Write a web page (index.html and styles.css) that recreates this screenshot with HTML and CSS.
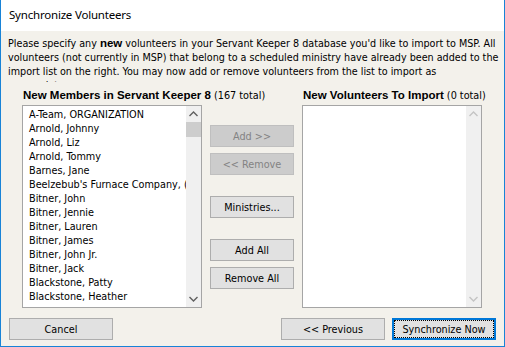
FILE: index.html
```html
<!DOCTYPE html>
<html lang="en">
<head>
    <meta charset="UTF-8">
    <title>Synchronize Volunteers</title>
    <link rel="stylesheet" href="styles.css">
</head>
<body>
    <div class="dialog">
        <div class="titlebar">Synchronize Volunteers</div>
        <div class="content">
            <p class="intro">Please specify any <b>new</b> volunteers in your Servant Keeper 8 database you'd like to import to MSP. All volunteers (not currently in MSP) that belong to a scheduled ministry have already been added to the import list on the right. You may now add or remove volunteers from the list to import as<br>appropriate.</p>

            <div class="picker">
                <!-- miembros nuevos -->
                <div class="pane">
                    <div class="pane-title"><b>New Members in Servant Keeper 8</b> (167 total)</div>
                    <div class="listbox">
                        <ul class="items">
                            <li>A-Team, ORGANIZATION</li>
                            <li>Arnold, Johnny</li>
                            <li>Arnold, Liz</li>
                            <li>Arnold, Tommy</li>
                            <li>Barnes, Jane</li>
                            <li>Beelzebub's Furnace Company, (Org)</li>
                            <li>Bitner, John</li>
                            <li>Bitner, Jennie</li>
                            <li>Bitner, Lauren</li>
                            <li>Bitner, James</li>
                            <li>Bitner, John Jr.</li>
                            <li>Bitner, Jack</li>
                            <li>Blackstone, Patty</li>
                            <li>Blackstone, Heather</li>
                        </ul>
                        <div class="scrollbar">
                            <span class="arrow"><svg width="9" height="6" viewBox="0 0 9 6"><polyline points="0.5,5 4.5,1 8.5,5" /></svg></span>
                            <span class="thumb"></span>
                            <span class="track"></span>
                            <span class="arrow"><svg width="9" height="6" viewBox="0 0 9 6"><polyline points="0.5,1 4.5,5 8.5,1" /></svg></span>
                        </div>
                    </div>
                </div>

                <div class="actions">
                    <button class="btn" disabled>Add &gt;&gt;</button>
                    <button class="btn" disabled>&lt;&lt; Remove</button>
                    <button class="btn spaced">Ministries...</button>
                    <button class="btn spaced">Add All</button>
                    <button class="btn">Remove All</button>
                </div>

                <!-- voluntarios a importar -->
                <div class="pane">
                    <div class="pane-title"><b>New Volunteers To Import</b> (0 total)</div>
                    <div class="listbox">
                        <ul class="items"></ul>
                        <div class="scrollbar disabled">
                            <span class="arrow"><svg width="9" height="6" viewBox="0 0 9 6"><polyline points="0.5,5 4.5,1 8.5,5" /></svg></span>
                            <span class="track"></span>
                            <span class="arrow"><svg width="9" height="6" viewBox="0 0 9 6"><polyline points="0.5,1 4.5,5 8.5,1" /></svg></span>
                        </div>
                    </div>
                </div>
            </div>

            <div class="footer">
                <button class="btn wide">Cancel</button>
                <span class="spacer"></span>
                <button class="btn wide">&lt;&lt; Previous</button>
                <button class="btn wide default">Synchronize Now</button>
            </div>
        </div>
    </div>
</body>
</html>
```

FILE: styles.css
```css
body {
    margin: 0;
    font-family: Tahoma, "DejaVu Sans Condensed", sans-serif;
    font-size: 10.75px;
    color: #000;
}

b {
    font-family: "Liberation Sans", sans-serif;
    font-size: 11.5px;
}

.dialog {
    width: 505px;
    height: 347px;
    box-sizing: border-box;
    border: 1px solid #1883d7;
    border-top: none;
    display: flex;
    flex-direction: column;
}

.titlebar {
    height: 31px;
    line-height: 30px;
    padding-left: 8px;
    background-color: #fff;
    font-family: "Segoe UI", "Noto Sans", sans-serif;
    font-size: 11.5px;
    letter-spacing: -0.2px;
}

.content {
    flex: 1;
    background-color: #f3f1eb;
    padding: 5px 0 0 7px;
}

.intro {
    margin: 0;
    height: 46px;
    font-size: 10.7px;
    line-height: 14px;
    overflow: hidden;
}

.picker {
    display: flex;
    gap: 8px;
    margin: 6px 0 0 14px;
}

.pane {
    width: 180px;
}

.pane-title {
    padding-left: 1px;
    line-height: 14px;
    margin-bottom: 2px;
    white-space: nowrap;
}

.listbox {
    height: 203px;
    box-sizing: border-box;
    border: 1px solid #a5a5a5;
    background-color: #fff;
    display: flex;
}

.items {
    flex: 1;
    margin: 0;
    padding: 2px 0 0 6px;
    list-style: none;
    overflow: hidden;
    white-space: nowrap;
}

.items li {
    line-height: 14px;
}

.scrollbar {
    width: 15px;
    background-color: #f0f0f0;
    display: flex;
    flex-direction: column;
}

.scrollbar .arrow {
    height: 16px;
    display: flex;
    align-items: center;
    justify-content: center;
}

.scrollbar polyline {
    fill: none;
    stroke: #606060;
    stroke-width: 1.4;
}

.scrollbar.disabled polyline {
    stroke: #c4c4c4;
}

.scrollbar .thumb {
    height: 15px;
    background-color: #cdcdcd;
}

.scrollbar .track {
    flex: 1;
}

.actions {
    width: 84px;
    padding-top: 37px;
    display: flex;
    flex-direction: column;
    gap: 6px;
}

.actions .spaced {
    margin-top: 15px;
}

.btn {
    height: 22px;
    box-sizing: border-box;
    padding: 0;
    border: 1px solid #adadad;
    background-color: #e1e1e1;
    font-family: inherit;
    font-size: 10.75px;
    color: #000;
}

.btn:disabled {
    background-color: #cccccc;
    border-color: #bfbfbf;
    color: #838383;
}

.footer {
    display: flex;
    gap: 7px;
    margin: 10px 8px 0 1px;
}

.footer .spacer {
    flex: 1;
}

.btn.wide {
    width: 104px;
}

.btn.default {
    border: 2px solid #0078d7;
    outline: 1px dotted #000;
    outline-offset: -3px;
}
```
